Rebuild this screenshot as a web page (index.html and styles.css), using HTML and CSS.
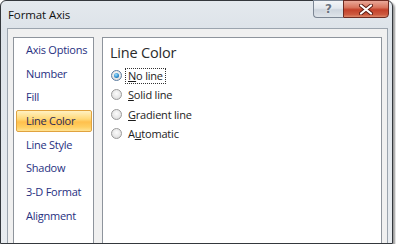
FILE: index.html
```html
<!DOCTYPE html>
<html lang="en">
<head>
  <meta charset="UTF-8" />
  <title>Format Axis</title>
  <link rel="stylesheet" href="styles.css">
</head>
<body>

  <div class="window">
    <div class="titlebar">
      <span class="title">Format Axis</span>
      <div class="caption-buttons">
        <span class="cap-btn help">?</span>
        <span class="cap-btn close">
          <svg width="14" height="11" viewBox="0 0 14 11">
            <path d="M2 1.5 L12 9.5 M12 1.5 L2 9.5" stroke="#5a1b12" stroke-width="4" stroke-linecap="round"/>
            <path d="M2 1.5 L12 9.5 M12 1.5 L2 9.5" stroke="#ffffff" stroke-width="2.2" stroke-linecap="round"/>
          </svg>
        </span>
      </div>
    </div>

    <div class="client">
      <ul class="nav">
        <li>Axis Options</li>
        <li>Number</li>
        <li>Fill</li>
        <li class="active">Line Color</li>
        <li>Line Style</li>
        <li>Shadow</li>
        <li>3-D Format</li>
        <li>Alignment</li>
      </ul>

      <div class="content">
        <h2>Line Color</h2>
        <label class="radio checked"><span class="dot"></span><span class="focus"><u>N</u>o line</span></label>
        <label class="radio"><span class="dot"></span><span><u>S</u>olid line</span></label>
        <label class="radio"><span class="dot"></span><span><u>G</u>radient line</span></label>
        <label class="radio"><span class="dot"></span><span>A<u>u</u>tomatic</span></label>
      </div>
    </div>
  </div>

</body>
</html>
```

FILE: styles.css
```css
body {
  margin: 0;
  background: #ffffff;
  font-family: 'Open Sans', 'Noto Sans', sans-serif;
}
.window {
  width: 393px;
  height: 244px;
  box-sizing: border-box;
  border: 1px solid #34383d;
  border-radius: 6px 6px 0 0;
  padding: 0 4px 0 6px;
  background: linear-gradient(180deg, #e4e9ee 0%, #dde3e9 12%, #e8ecf0 100%);
  box-shadow: 2px 2px 2px rgba(0, 0, 0, 0.4);
  display: flex;
  flex-direction: column;
}
.titlebar {
  height: 27px;
  display: flex;
  justify-content: space-between;
  align-items: flex-start;
}
.title {
  font-size: 11.5px;
  letter-spacing: -0.1px;
  color: #111;
  margin-left: 1px;
  margin-top: 6px;
}
.caption-buttons {
  display: flex;
  margin-top: -1px;
  margin-right: -1px;
}
.cap-btn {
  height: 18px;
  box-sizing: border-box;
  display: flex;
  align-items: center;
  justify-content: center;
}
.help {
  width: 30px;
  border: 1px solid #7c8694;
  border-right: none;
  border-radius: 0 0 0 4px;
  background: linear-gradient(180deg, #f3f5f8 0%, #e2e7ed 45%, #cdd4dd 55%, #dfe4ea 100%);
  color: #6a7380;
  font-family: 'DejaVu Sans', sans-serif;
  font-weight: bold;
  font-size: 12px;
  text-shadow: 0 0 2px #ffffff;
}
.close {
  width: 46px;
  border: 1px solid #6e2b22;
  border-radius: 0 0 4px 0;
  background: linear-gradient(180deg, #e9a899 0%, #d9765f 40%, #c3412a 55%, #cd5a40 85%, #de8a6c 100%);
}
.client {
  flex: 1;
  display: flex;
  gap: 8px;
  padding: 8px 5px 0 5px;
  border: 1px solid #9ba4ae;
  border-bottom: none;
  background: #f0f0f0;
  overflow: hidden;
}
.nav {
  width: 81px;
  box-sizing: border-box;
  margin: 0;
  padding: 1px 0 0 0;
  list-style: none;
  background: #fff;
  border: 1px solid #8e949c;
  border-bottom: none;
  font-size: 11px;
  letter-spacing: -0.25px;
  color: #27307f;
}
.nav li {
  height: 22px;
  box-sizing: border-box;
  margin: 0 1px 1.7px 2px;
  padding-left: 9px;
  line-height: 20px;
  border: 1px solid transparent;
  white-space: nowrap;
}
.nav li.active {
  border-color: #e0a33f;
  border-radius: 2px;
  background: linear-gradient(180deg, #fff1c2 0%, #ffd979 40%, #ffc04d 55%, #ffcf62 80%, #ffe394 100%);
  color: #2a2a55;
}
.content {
  flex: 1;
  background: #fff;
  border: 1px solid #8e949c;
  border-bottom: none;
  padding: 6px 0 0 7px;
}
.content h2 {
  margin: 0 0 4px 0;
  font-weight: normal;
  font-size: 14.5px;
  letter-spacing: -0.2px;
  line-height: 18px;
  color: #2b2b2b;
}
.radio {
  display: flex;
  align-items: center;
  height: 19.3px;
  font-size: 11px;
  letter-spacing: -0.2px;
  color: #1c1c1c;
}
.radio .dot {
  width: 11px;
  height: 11px;
  box-sizing: border-box;
  margin: 0 6px 0 1px;
  border-radius: 50%;
  border: 1px solid #9a9a9a;
  background: radial-gradient(circle at 50% 40%, #fbfbfb 0%, #e6e6e6 60%, #cfcfcf 100%);
  display: flex;
  align-items: center;
  justify-content: center;
}
.radio.checked .dot {
  border-color: #5d7da0;
}
.radio.checked .dot::after {
  content: "";
  width: 5px;
  height: 5px;
  border-radius: 50%;
  background: radial-gradient(circle at 40% 35%, #9fe0ff 0%, #2f8fd0 55%, #0f4f8a 100%);
}
.focus {
  outline: 1px dotted #333;
  padding: 0 2px;
  margin-left: -2px;
  line-height: 14px;
}
```
